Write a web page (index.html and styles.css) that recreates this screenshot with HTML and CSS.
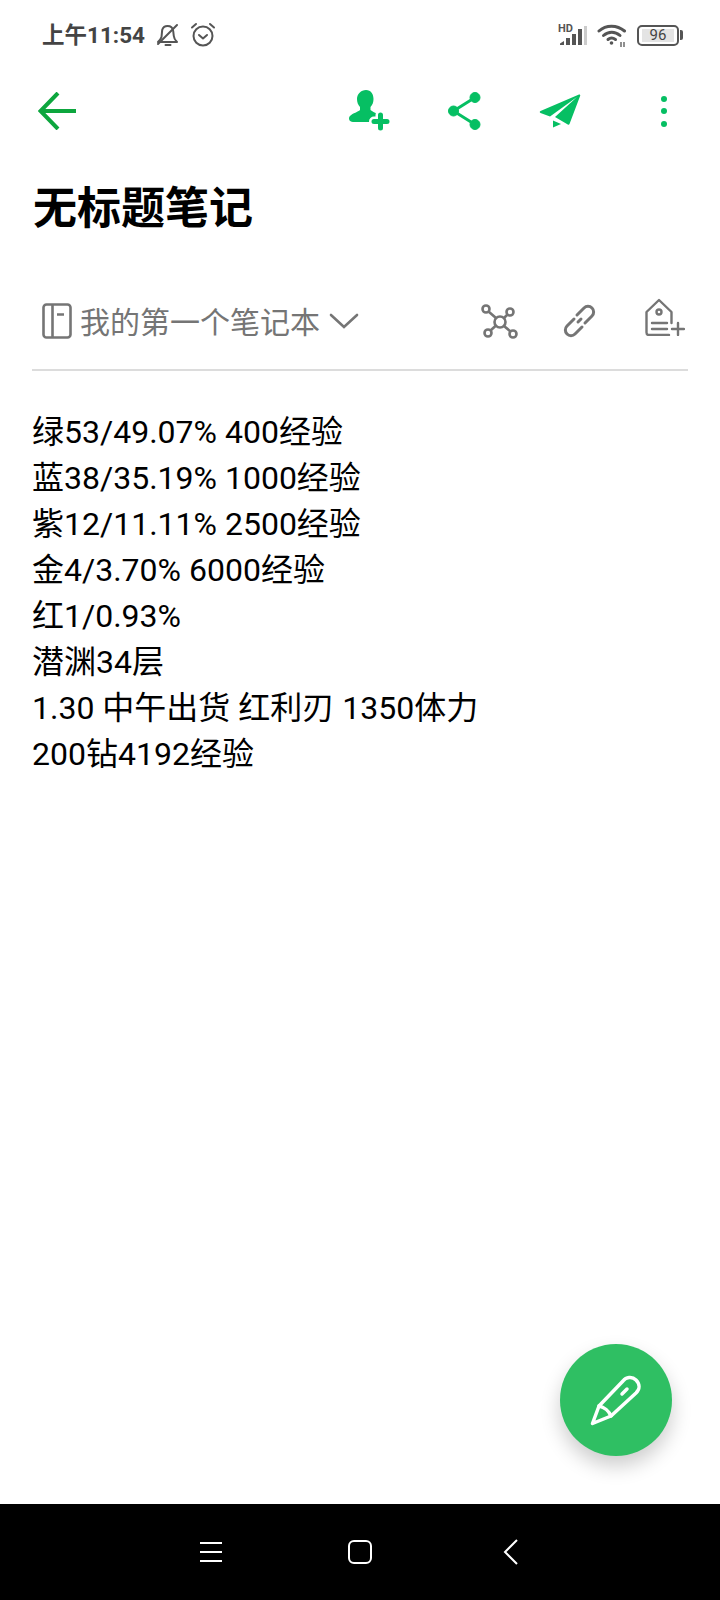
FILE: index.html
```html
<!DOCTYPE html>
<html lang="zh-CN">
<head>
    <meta charset="UTF-8">
    <meta name="viewport" content="width=device-width, initial-scale=1.0">
    <title>无标题笔记</title>
    <link rel="stylesheet" href="styles.css">
</head>
<body>
    <div class="screen">
        <div class="status-bar">
            <div class="status-left">
                <span class="status-time">上午11:54</span>
                <svg class="status-bell" width="24" height="24" viewBox="0 0 24 24" fill="none" stroke="#555" stroke-width="2" stroke-linecap="round" stroke-linejoin="round">
                    <path d="M2 19h19c-2-2-3-3.500-3.200-6l-.6-5c-.4-3-2.800-5-5.700-5-2.400 0-4.500 1.500-5.300 3.800L5.500 14C5 16 3.500 17.500 2 19z"/>
                    <path d="M21 2 2 21M9.500 22h5"/>
                </svg>
                <svg class="status-alarm" width="26" height="26" viewBox="0 0 26 26" fill="none" stroke="#555" stroke-width="2" stroke-linecap="round" stroke-linejoin="round">
                    <circle cx="13" cy="14" r="9.500"/>
                    <path d="M9 13l4 3.500 4-3.500M2 5.500 6 2M24 5.500 20 2"/>
                </svg>
            </div>
            <div class="status-right">
                <svg width="30" height="24" viewBox="0 0 30 24">
                    <text x="0" y="9" class="hd-label">HD</text>
                    <path d="M2 22v-1.500L6 18v4z" fill="#555"/>
                    <rect x="8" y="15" width="4" height="7" fill="#555"/>
                    <rect x="14" y="11" width="4" height="11" fill="#555"/>
                    <rect x="20" y="6" width="4" height="16" fill="#555"/>
                    <rect x="26" y="3" width="3" height="19" fill="#ccc"/>
                </svg>
                <svg class="status-wifi" width="30" height="24" viewBox="0 0 30 24" fill="none" stroke="#555" stroke-width="3" stroke-linecap="round">
                    <path d="M2 8C9 1.500 20 1.500 27.500 8"/>
                    <path d="M6.500 12.500c5-4.500 11.500-4.500 16.500 0"/>
                    <path d="M11 16.500c2.200-1.800 5-1.800 7.500 0"/>
                    <circle cx="14.500" cy="20" r="1.800" fill="#555" stroke="none"/>
                    <path d="M24 19v5M27 19v5" stroke-width="1.300" stroke-linecap="butt"/>
                </svg>
                <div class="battery">
                    <div class="battery-body"><span class="battery-level">96</span></div>
                    <div class="battery-tip"></div>
                </div>
            </div>
        </div>

        <div class="toolbar">
            <svg width="38" height="38" viewBox="0 0 38 38" fill="none" stroke="#0da63e" stroke-width="4">
                <path d="M20 1 2.500 19 20 37M2.500 19H38"/>
            </svg>
            <div class="toolbar-actions">
                <svg width="42" height="42" viewBox="0 0 42 42" fill="#06bf63">
                    <path d="M18 0c5 0 7.500 4 7.500 9 0 3-1 6-3 8v3c1.500 1.500 5 3 8 4v8H5c-4 0-5-4-3-6 3-3 8-4 10-6v-3c-2-2-3-5-3-8 0-5 4-9 9-9z"/>
                    <path d="M26 31.500h13M32.500 25v13" stroke="#fff" stroke-width="10" stroke-linecap="round"/>
                    <path d="M26 31.500h13M32.500 25v13" stroke="#06bf63" stroke-width="5" stroke-linecap="round"/>
                </svg>
                <svg width="33" height="38" viewBox="0 0 33 38" fill="#06bf63" stroke="#06bf63">
                    <circle cx="5.500" cy="19" r="5"/>
                    <circle cx="27" cy="5.500" r="5"/>
                    <circle cx="27" cy="32.500" r="5"/>
                    <path d="M5.500 19 27 5.500M5.500 19 27 32.500" stroke-width="3"/>
                </svg>
                <svg width="42" height="34" viewBox="0 0 42 34" fill="#06bf63">
                    <path d="M40 .5c.8-.3 1.500.4 1.200 1.200L30.500 30c-.3.8-1 1-1.700.6L16 23 38 3 11 22.500 1.500 19c-1-.5-1-1.500 0-2z"/>
                    <path d="M14 26.500v7l8-3.500z"/>
                </svg>
                <div class="more-dots"><span></span><span></span><span></span></div>
            </div>
        </div>

        <h1 class="note-title">无标题笔记</h1>

        <div class="meta-row">
            <div class="notebook">
                <svg width="30" height="36" viewBox="0 0 30 36" fill="none" stroke="#757575" stroke-width="2.600" stroke-linejoin="round">
                    <rect x="1.500" y="1.500" width="27" height="33" rx="3"/>
                    <path d="M10.500 1.500v33M15 11.500h7"/>
                </svg>
                <span class="notebook-name">我的第一个笔记本</span>
                <svg width="30" height="18" viewBox="0 0 30 18" fill="none" stroke="#757575" stroke-width="2.600" stroke-linecap="round">
                    <path d="M2 3l13 12L28 3"/>
                </svg>
            </div>
            <div class="meta-actions">
                <svg width="38" height="38" viewBox="0 0 38 38" fill="none" stroke="#757575" stroke-width="2.600">
                    <circle cx="19" cy="20" r="5.500"/>
                    <circle cx="5" cy="7" r="3.500"/>
                    <circle cx="29" cy="10" r="3.500"/>
                    <circle cx="7" cy="31" r="3.500"/>
                    <circle cx="32" cy="32" r="3.500"/>
                    <path d="M7.500 9.500l7.500 6.500M26.500 12.500l-3.500 3.500M9.500 28.500l5.500-5M29.500 29.500 23 24"/>
                </svg>
                <svg width="34" height="34" viewBox="0 0 34 34" fill="none" stroke="#757575" stroke-width="3" stroke-linecap="round">
                    <path d="M11 15 4 22a5.600 5.600 0 0 0 8 8L19 23"/>
                    <path d="M22 19 29 12a5.600 5.600 0 0 0-8-8L14 11"/>
                    <path d="M15 18l3-3"/>
                </svg>
                <svg class="tag-icon" width="40" height="38" viewBox="0 0 40 38" fill="none" stroke="#757575" stroke-width="2.400" stroke-linecap="round" stroke-linejoin="round">
                    <path d="M24 37H4c-1.500 0-2.500-1-2.500-2.500V14L14 2l12.500 12v11"/>
                    <circle cx="14" cy="14" r="2.500"/>
                    <path d="M7 25h15M7 31h15M27 31h12M33 25v12"/>
                </svg>
            </div>
        </div>

        <div class="note-body">
            <div>绿53/49.07% 400经验</div>
            <div>蓝38/35.19% 1000经验</div>
            <div>紫12/11.11% 2500经验</div>
            <div>金4/3.70% 6000经验</div>
            <div>红1/0.93%</div>
            <div>潜渊34层</div>
            <div>1.30 中午出货 红利刃 1350体力</div>
            <div>200钻4192经验</div>
        </div>

        <button class="fab">
            <svg width="52" height="52" viewBox="0 0 52 52" fill="none" stroke="#fff" stroke-width="3.500" stroke-linejoin="round" stroke-linecap="round">
                <path d="M2.500 49.500 9 32 33 7c3-4 9-5 13-1s4 9 0 13L21 42z"/>
                <path d="M9 32c5 1 10 5 12 10M32 20l5-5"/>
            </svg>
        </button>

        <div class="nav-bar">
            <div class="nav-menu"><span></span><span></span><span></span></div>
            <div class="nav-home"></div>
            <svg width="16" height="26" viewBox="0 0 16 26" fill="none" stroke="#fff" stroke-width="2">
                <path d="M14 1 2 13l12 12"/>
            </svg>
        </div>
    </div>
</body>
</html>
```

FILE: styles.css
```css
/* Phone screen */
html, body {
    margin: 0;
    padding: 0;
    background-color: #fff;
}

.screen {
    position: relative;
    width: 720px;
    height: 1600px;
    display: flex;
    flex-direction: column;
    overflow: hidden;
    font-family: Roboto, "Noto Sans CJK SC", sans-serif;
    color: #000;
}

/* Status bar */
.status-bar {
    height: 70px;
    display: flex;
    justify-content: space-between;
    align-items: center;
    padding: 0 37px 0 42px;
    box-sizing: border-box;
}

.status-left,
.status-right {
    display: flex;
    align-items: center;
}

.status-time {
    padding-bottom: 4px;
    font-size: 22.5px;
    font-weight: 700;
    color: #444;
}

.status-bell {
    margin-left: 11px;
}

.status-alarm {
    margin-left: 10px;
}

.hd-label {
    font-family: Roboto, sans-serif;
    font-size: 11px;
    font-weight: 700;
    fill: #555;
}

.status-wifi {
    margin-left: 9px;
}

.battery {
    display: flex;
    align-items: center;
    margin-left: 10px;
}

.battery-body {
    width: 32px;
    height: 13px;
    padding: 2px 3px;
    border: 2px solid #555;
    border-radius: 5px;
    display: flex;
}

.battery-level {
    flex: 1;
    background-color: #e4e4e4;
    color: #444;
    font-size: 15px;
    line-height: 13px;
    text-align: center;
}

.battery-tip {
    width: 3px;
    height: 10px;
    margin-left: 1px;
    background-color: #555;
    border-radius: 0 2px 2px 0;
}

/* Top toolbar */
.toolbar {
    height: 82px;
    display: flex;
    justify-content: space-between;
    align-items: center;
    padding: 0 53px 0 38px;
}

.toolbar-actions {
    display: flex;
    align-items: center;
    gap: 58px;
}

.more-dots {
    display: flex;
    flex-direction: column;
    gap: 6.5px;
    margin-left: 22px;
}

.more-dots span {
    width: 6px;
    height: 6px;
    border-radius: 50%;
    background-color: #06bf63;
}

/* Title */
.note-title {
    margin: 19px 0 0 33px;
    font-size: 44px;
    line-height: 76px;
    font-weight: 700;
}

/* Notebook row */
.meta-row {
    height: 62px;
    margin: 43px 32px 0 32px;
    padding: 0 3px 17px 10px;
    display: flex;
    justify-content: space-between;
    align-items: center;
    border-bottom: 2px solid #dcdcdc;
}

.notebook {
    display: flex;
    align-items: center;
}

.notebook-name {
    margin: 0 9px 0 8px;
    padding-bottom: 2px;
    font-size: 30px;
    color: #757575;
}

.meta-actions {
    display: flex;
    align-items: center;
    gap: 44px;
}

.tag-icon {
    margin: 0 0 8px 4px;
}

/* Note text */
.note-body {
    margin: 38px 0 0 32px;
    font-size: 32px;
    line-height: 46px;
}

/* Floating button */
.fab {
    position: absolute;
    left: 560px;
    top: 1344px;
    width: 112px;
    height: 112px;
    padding: 0;
    border: none;
    border-radius: 50%;
    background-color: #2fbf63;
    box-shadow: 0 10px 20px rgba(0, 0, 0, 0.2);
    display: flex;
    justify-content: center;
    align-items: center;
}

/* Bottom navigation */
.nav-bar {
    margin-top: auto;
    height: 96px;
    padding: 0 201px 0 200px;
    background-color: #000;
    display: flex;
    justify-content: space-between;
    align-items: center;
}

.nav-menu {
    display: flex;
    flex-direction: column;
    gap: 7px;
}

.nav-menu span {
    width: 22px;
    height: 2px;
    background-color: #fff;
}

.nav-home {
    width: 20px;
    height: 20px;
    margin-right: 5px;
    border: 2px solid #fff;
    border-radius: 6px;
}
```
